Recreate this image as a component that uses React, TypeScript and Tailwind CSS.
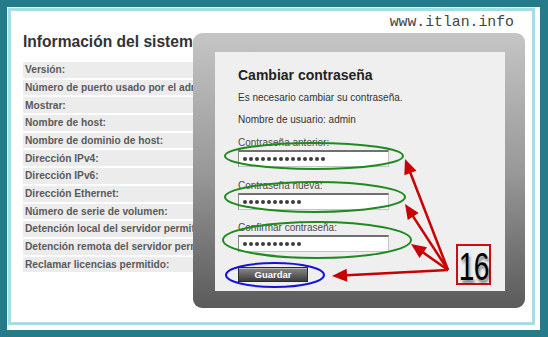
const rows = [
  "Versión:",
  "Número de puerto usado por el administrador:",
  "Mostrar:",
  "Nombre de host:",
  "Nombre de dominio de host:",
  "Dirección IPv4:",
  "Dirección IPv6:",
  "Dirección Ethernet:",
  "Número de serie de volumen:",
  "Detención local del servidor permitida:",
  "Detención remota del servidor permitida:",
  "Reclamar licencias permitido:",
];

const fields = [
  { label: "Contraseña anterior:", dots: 14, mt: "mt-[11px]" },
  { label: "Contraseña nueva:", dots: 10, mt: "mt-[13px]" },
  { label: "Confirmar contraseña:", dots: 10, mt: "mt-[12px]" },
];

const origin = { x: 448, y: 270 };
const tips = [
  { x: 405, y: 159 },
  { x: 405, y: 204 },
  { x: 411, y: 244 },
  { x: 332, y: 276 },
];

function arrowHead(tx: number, ty: number) {
  const dx = tx - origin.x;
  const dy = ty - origin.y;
  const len = Math.hypot(dx, dy);
  const ux = dx / len;
  const uy = dy / len;
  const bx = tx - ux * 15;
  const by = ty - uy * 15;
  const px = -uy * 6.5;
  const py = ux * 6.5;
  return `${tx},${ty} ${bx + px},${by + py} ${bx - px},${by - py}`;
}

function Annotations() {
  return (
    <svg className="pointer-events-none absolute inset-0" width={548} height={337}>
      <ellipse cx={314} cy={156} rx={89} ry={13} fill="none" stroke="#1f8a1f" strokeWidth={2} />
      <ellipse cx={315} cy={197} rx={90} ry={15} fill="none" stroke="#1f8a1f" strokeWidth={2} />
      <ellipse cx={317} cy={240} rx={94} ry={18} fill="none" stroke="#1f8a1f" strokeWidth={2} />
      <ellipse cx={275} cy={275} rx={49} ry={12} fill="none" stroke="#1414d8" strokeWidth={2} />
      {tips.map((t, i) => {
        const dx = t.x - origin.x;
        const dy = t.y - origin.y;
        const len = Math.hypot(dx, dy);
        return (
          <g key={i}>
            <line
              x1={origin.x}
              y1={origin.y}
              x2={t.x - (dx / len) * 10}
              y2={t.y - (dy / len) * 10}
              stroke="#c80000"
              strokeWidth={2.5}
            />
            <polygon points={arrowHead(t.x, t.y)} fill="#c80000" />
          </g>
        );
      })}
    </svg>
  );
}

function PasswordBox({ dots }: { dots: number }) {
  return (
    <div className="mt-[1px] flex h-[17px] w-[151px] items-center gap-[2px] border border-[#c4c4c4] border-l-[#8a8a8a] border-t-2 border-t-[#707070] bg-white pl-[4px]">
      {Array.from({ length: dots }).map((_, i) => (
        <span key={i} className="h-[4px] w-[4px] rounded-full bg-[#3d3d3d]" />
      ))}
    </div>
  );
}

export default function App() {
  return (
    <div className="relative h-[337px] w-[548px] overflow-hidden bg-[#267b8b] pb-[7px] pl-[7px] pr-[8px] pt-[7px] font-['Liberation_Sans',Arial,sans-serif]">
      <div className="h-full w-full bg-white pb-[5px] pl-[1px] pr-[5px] pt-[1px]">
        <div className="h-full w-full border-[3px] border-[#a8dbe2] bg-white pl-[12px] pr-[10px]">
          <div className="mt-[3px] h-[16px] pr-[8px] text-right font-['Liberation_Mono',monospace] text-[14.8px] leading-[16px] text-[#444]">
            www.itlan.info
          </div>
          <h1 className="mt-[3px] h-[18px] whitespace-nowrap text-[15.6px] font-bold leading-[18px] text-[#333]">
            Información del sistema
          </h1>
          <div className="mt-[11px] flex flex-col gap-[2px]">
            {rows.map((r) => (
              <div
                key={r}
                className="flex h-[15.7px] items-center whitespace-nowrap bg-[#ececec] pl-[2px] text-[10.2px] font-bold text-[#5a5a5a]"
              >
                {r}
              </div>
            ))}
          </div>
        </div>
      </div>

      <div className="absolute left-[193px] top-[33px] h-[275px] w-[332px] rounded-[9px] bg-gradient-to-b from-[#c6c5c6] via-[#9a999a] to-[#5b5b5b] pb-[17px] pl-[22px] pr-[20px] pt-[19px]">
        <div className="h-full w-full bg-[#efefef] pl-[23px] pt-[15px] text-[#333]">
          <h2 className="h-[16px] text-[14px] font-bold leading-[16px] text-[#222]">Cambiar contraseña</h2>
          <p className="mt-[9px] text-[10px] leading-[12px]">Es necesario cambiar su contraseña.</p>
          <p className="mt-[10px] text-[10px] leading-[12px]">Nombre de usuario: admin</p>
          {fields.map((f) => (
            <div key={f.label} className={f.mt}>
              <div className="text-[10px] leading-[12px] text-[#4a4a4a]">{f.label}</div>
              <PasswordBox dots={f.dots} />
            </div>
          ))}
          <button
            type="button"
            className="mt-[15px] flex h-[15px] w-[70px] items-center justify-center border border-[#2a2a2a] bg-gradient-to-b from-[#8a8a8a] to-[#3e3e3e] text-[9.5px] font-bold leading-none text-white shadow-[inset_0_1px_0_#bbb]"
          >
            Guardar
          </button>
        </div>
      </div>

      <Annotations />

      <div className="absolute left-[456px] top-[244px] flex h-[41px] w-[35px] items-center justify-center overflow-visible border-2 border-[#c81010]">
        <span className="mt-[3px] inline-block scale-x-[0.72] text-[39px] leading-none tracking-[-1px] text-black [text-shadow:2px_3px_3px_rgba(0,0,0,0.45)]">
          16
        </span>
      </div>
    </div>
  );
}
